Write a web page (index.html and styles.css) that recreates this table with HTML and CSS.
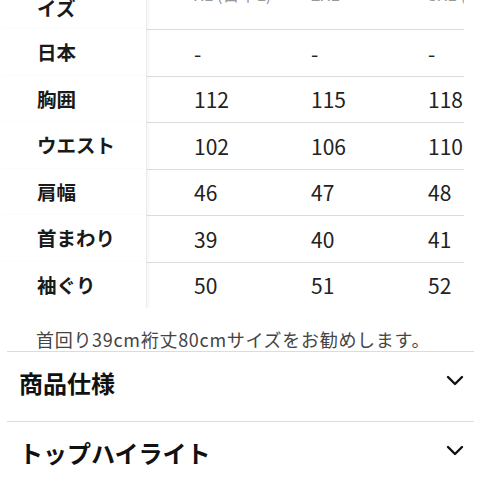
FILE: index.html
```html
<!DOCTYPE html>
<html lang="ja">
<head>
<meta charset="utf-8">
<link rel="stylesheet" href="styles.css">
</head>
<body>
<div class="size-table">
  <div class="row row-head">
    <div class="label">サ<br>イズ</div>
    <div class="cell head">XL (日本L)</div>
    <div class="cell head">2XL</div>
    <div class="cell head">3XL (日</div>
  </div>
  <div class="row">
    <div class="label">日本</div>
    <div class="cell">-</div>
    <div class="cell">-</div>
    <div class="cell">-</div>
  </div>
  <div class="row">
    <div class="label">胸囲</div>
    <div class="cell">112</div>
    <div class="cell">115</div>
    <div class="cell">118</div>
  </div>
  <div class="row">
    <div class="label">ウエスト</div>
    <div class="cell">102</div>
    <div class="cell">106</div>
    <div class="cell">110</div>
  </div>
  <div class="row">
    <div class="label">肩幅</div>
    <div class="cell">46</div>
    <div class="cell">47</div>
    <div class="cell">48</div>
  </div>
  <div class="row">
    <div class="label">首まわり</div>
    <div class="cell">39</div>
    <div class="cell">40</div>
    <div class="cell">41</div>
  </div>
  <div class="row">
    <div class="label">袖ぐり</div>
    <div class="cell">50</div>
    <div class="cell">51</div>
    <div class="cell">52</div>
  </div>
</div>
<p class="note">首回り39cm裄丈80cmサイズをお勧めします。</p>
<div class="accordion">
  <div class="acc-item">
    <span class="acc-title">商品仕様</span>
    <svg class="chev" width="18" height="11" viewBox="0 0 18 11"><path d="M2 2 L9 9 L16 2" fill="none" stroke="#111" stroke-width="2.4" stroke-linecap="round" stroke-linejoin="round"/></svg>
  </div>
  <div class="acc-item">
    <span class="acc-title">トップハイライト</span>
    <svg class="chev" width="18" height="11" viewBox="0 0 18 11"><path d="M2 2 L9 9 L16 2" fill="none" stroke="#111" stroke-width="2.4" stroke-linecap="round" stroke-linejoin="round"/></svg>
  </div>
</div>
</body>
</html>
```
FILE: styles.css
```css
html, body {
  margin: 0;
  padding: 0;
  background: #fff;
}
body {
  font-family: "Noto Sans CJK JP", "Noto Sans", sans-serif;
  color: #1a1a1a;
  overflow: hidden;
}
.size-table {
  width: 464px;
  overflow: hidden;
  margin-top: -27px;
}
.row {
  display: grid;
  grid-template-columns: 147px repeat(3, 117px);
  grid-template-rows: 46.5px;
  height: 46.5px;
}
.row-head {
  grid-template-rows: 56px;
  height: 56px;
}
.label {
  font-weight: 700;
  font-size: 19.5px;
  line-height: 26px;
  padding-left: 37px;
  display: flex;
  align-items: center;
  border-right: 1px solid #ececec;
  box-shadow: 2px 0 3px rgba(0, 0, 0, 0.04);
  background: #fff;
  position: relative;
  z-index: 1;
  min-height: 0;
}
.row-head .label {
  box-sizing: border-box;
  padding-bottom: 8px;
  flex-direction: column;
  justify-content: flex-end;
  align-items: flex-start;
}
.cell {
  padding-left: 47px;
  font-size: 21px;
  color: #222;
  display: flex;
  align-items: center;
  white-space: nowrap;
  border-top: 1px solid #dcdcdc;
  min-height: 0;
}
.row-head .cell {
  border-top: none;
  align-items: flex-end;
  padding-bottom: 24px;
  font-size: 17px;
  line-height: 22px;
  color: #999;
}
.note {
  margin: 0;
  padding: 19px 0 0 36px;
  font-size: 18px;
  letter-spacing: 0.7px;
  line-height: 24px;
  color: #444;
}
.accordion {
  margin: 0 7px;
}
.acc-item {
  border-top: 1px solid #dcdcdc;
  height: 70px;
  box-sizing: border-box;
  padding: 15px 10px 0 12px;
  display: flex;
  justify-content: space-between;
  align-items: flex-start;
}
.acc-title {
  font-size: 24px;
  font-weight: 700;
  line-height: 32px;
  color: #111;
}
.chev {
  margin-top: 8px;
}
```
